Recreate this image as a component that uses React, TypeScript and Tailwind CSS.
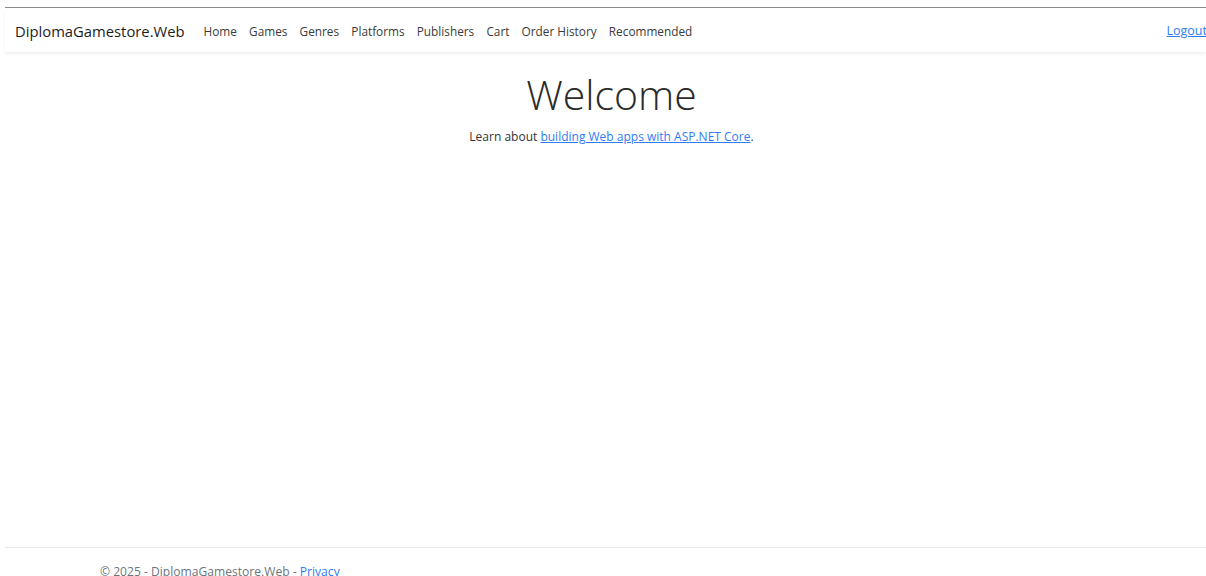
const navLinks = ["Home", "Games", "Genres", "Platforms", "Publishers", "Cart", "Order History", "Recommended"];

export default function App() {
  return (
    <div
      className="h-[576px] overflow-hidden bg-white pt-[7px] pl-[5px] text-[#212529]"
      style={{ fontFamily: '"Segoe UI", "Open Sans", "Noto Sans", sans-serif' }}
    >
      <div className="flex h-full flex-col border-t border-[#8a8a8a]">
        {/* top navbar */}
        <header className="flex h-[44px] items-center bg-white pt-[3px] pl-[10px] shadow-[0_2px_3px_rgba(0,0,0,0.06)]">
          <a className="mr-[19px] text-[14.8px] text-[#1d1d1d]">DiplomaGamestore.Web</a>
          <nav className="flex items-center gap-[12.2px] text-[11.8px] text-[#3a3a3a]">
            {navLinks.map((l) => (
              <a key={l}>{l}</a>
            ))}
          </nav>
          <a className="ml-auto -mr-[1px] text-[12.5px] text-[#2f7cf6] underline">Logout</a>
        </header>

        {/* main content */}
        <main className="flex flex-1 flex-col items-center pt-[17px] pl-[12px]">
          <h1 className="text-[41px] leading-[50px] font-light text-[#2b2b2b]">Welcome</h1>
          <p className="mt-[9px] text-[12px] text-[#333]">
            Learn about{" "}
            <a className="text-[#2f7cf6] underline">building Web apps with ASP.NET Core</a>.
          </p>
        </main>

        {/* footer */}
        <footer className="h-[29px] border-t border-[#e8e8e8] pl-[95px] pt-[16px] text-[12.1px] leading-[15px] text-[#6c757d]">
          © 2025 - DiplomaGamestore.Web - <a className="text-[#2f7cf6]">Privacy</a>
        </footer>
      </div>
    </div>
  );
}
